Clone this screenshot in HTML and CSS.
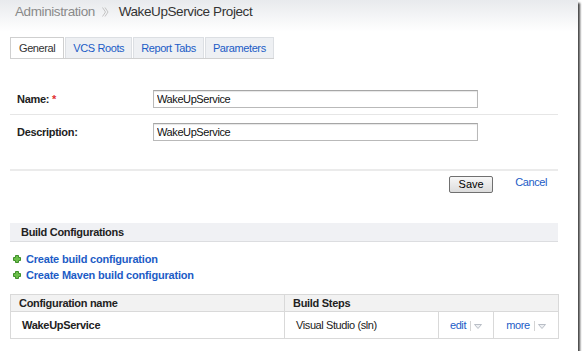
FILE: index.html
```html
<!DOCTYPE html>
<html lang="en">
<head>
<meta charset="UTF-8">
<title>WakeUpService Project</title>
<link rel="stylesheet" href="styles.css">
</head>
<body>
<div class="shot">
    <div class="page-head">
        <h1><span class="crumb">Administration</span>
            <svg class="crumb-sep" width="7" height="10" viewBox="0 0 7 10"><path d="M0.5 0.5 L3.5 5 L0.5 9.5 M3 0.5 L6 5 L3 9.5" fill="none" stroke="#c4c4c4" stroke-width="1"/></svg>
            WakeUpService Project</h1>
    </div>

    <ul class="tabs">
        <li class="tab active">General</li>
        <li class="tab"><a href="#">VCS Roots</a></li>
        <li class="tab"><a href="#">Report Tabs</a></li>
        <li class="tab"><a href="#">Parameters</a></li>
    </ul>

    <form class="settings">
        <div class="field">
            <label for="name">Name: <span class="req">*</span></label>
            <input id="name" type="text" value="WakeUpService">
        </div>
        <div class="field last">
            <label for="desc">Description:</label>
            <input id="desc" type="text" value="WakeUpService">
        </div>
        <div class="actions">
            <button type="button" class="btn-save">Save</button>
            <a href="#" class="cancel">Cancel</a>
        </div>
    </form>

    <div class="build">
        <h2 class="section-title">Build Configurations</h2>
        <ul class="create-links">
            <li><svg class="plus" width="8" height="8" viewBox="0 0 8 8"><path d="M2.5 0.5h3v2h2v3h-2v2h-3v-2h-2v-3h2z" fill="#6cc04a" stroke="#3f8f2a" stroke-width="1"/></svg><a href="#">Create build configuration</a></li>
            <li><svg class="plus" width="8" height="8" viewBox="0 0 8 8"><path d="M2.5 0.5h3v2h2v3h-2v2h-3v-2h-2v-3h2z" fill="#6cc04a" stroke="#3f8f2a" stroke-width="1"/></svg><a href="#">Create Maven build configuration</a></li>
        </ul>

        <table class="configs">
            <colgroup>
                <col class="w-name">
                <col class="w-steps">
                <col class="w-edit">
                <col class="w-more">
            </colgroup>
            <thead>
                <tr><th>Configuration name</th><th colspan="3">Build Steps</th></tr>
            </thead>
            <tbody>
                <tr>
                    <td class="c-name"><strong>WakeUpService</strong></td>
                    <td class="c-steps">Visual Studio (sln)</td>
                    <td class="c-act"><a href="#">edit</a><span class="drop"><svg width="8" height="5" viewBox="0 0 8 5"><path d="M0.5 0.5h7l-3.5 4z" fill="#eef0f3" stroke="#b9bec6" stroke-width="1"/></svg></span></td>
                    <td class="c-act"><a href="#">more</a><span class="drop"><svg width="8" height="5" viewBox="0 0 8 5"><path d="M0.5 0.5h7l-3.5 4z" fill="#eef0f3" stroke="#b9bec6" stroke-width="1"/></svg></span></td>
                </tr>
            </tbody>
        </table>
    </div>
</div>
</body>
</html>
```

FILE: styles.css
```css
html,
body {
    margin: 0;
    padding: 0;
    background: #fff;
}
body {
    font-family: "Liberation Sans", Arial, sans-serif;
    font-size: 11px;
    letter-spacing: -0.4px;
    color: #222;
}
a {
    color: #1c5cc6;
    text-decoration: none;
}
b,
strong {
    letter-spacing: -0.3px;
}

.shot {
    width: 578px;
    height: 351px;
    background: #fff;
    box-shadow: 2px 3px 2px #444;
    overflow: hidden;
}

/* header */
.page-head {
    height: 37px;
    background: linear-gradient(#e8eaed, #fff 32px);
}
.page-head h1 {
    margin: 0;
    padding: 2px 0 0 15px;
    font-size: 13.5px;
    line-height: 20px;
    font-weight: normal;
    letter-spacing: -0.4px;
    color: #333;
}
.page-head .crumb {
    color: #8a8a8a;
}
.crumb-sep {
    margin: 0 6px 0 4px;
    vertical-align: -1px;
}

/* tabs */
.tabs {
    display: flex;
    gap: 1px;
    width: fit-content;
    margin: 0 0 0 10px;
    padding: 0;
    list-style: none;
    border-bottom: 1px solid #d0d0d0;
}
.tab {
    height: 20px;
    line-height: 21px;
    padding: 0 7px;
    background: #eef0f3;
    border: 1px solid #dcdfe3;
    border-bottom: none;
}
.tab.active {
    padding: 0 8px;
    background: #fff;
    border-color: #cfcfcf;
    color: #333;
}

/* form */
.settings {
    margin: 25px 20px 0 10px;
}
.field {
    display: flex;
    align-items: center;
    padding: 6px 0 6px 7px;
    border-bottom: 1px solid #e6e6e6;
}
.field.last {
    padding: 8px 0 28px 7px;
    border-bottom: 2px solid #ebebeb;
}
.field label {
    width: 136px;
    font-weight: bold;
    letter-spacing: -0.3px;
    color: #222;
}
.req {
    color: #e03030;
}
.field input {
    box-sizing: border-box;
    width: 325px;
    height: 18px;
    margin: 0;
    padding: 0 3px;
    border: 1px solid #b9b9b9;
    border-top-color: #a6a6a6;
    box-shadow: inset 0 1px 1px #e6e6e6;
    font-family: inherit;
    font-size: 11px;
    letter-spacing: -0.4px;
    color: #111;
}
.actions {
    display: flex;
    justify-content: flex-end;
    align-items: flex-start;
    padding: 5px 11px 0 0;
}
.btn-save {
    box-sizing: border-box;
    width: 44px;
    height: 17px;
    padding: 0;
    border: 1px solid #707070;
    border-radius: 2px;
    background: linear-gradient(#f7f7f7, #dcdcdc);
    font-family: inherit;
    font-size: 11px;
    line-height: 15px;
    color: #000;
}
.cancel {
    margin-left: 22px;
    line-height: 13px;
}

/* build configurations */
.build {
    margin: 30px 20px 0 10px;
}
.section-title {
    margin: 0;
    height: 18px;
    line-height: 19px;
    padding-left: 11px;
    background: #f0f1f4;
    border-bottom: 1px solid #dcdde0;
    font-size: 11px;
    letter-spacing: -0.3px;
    color: #222;
}
.create-links {
    margin: 9px 0 0;
    padding: 0 0 0 3px;
    list-style: none;
}
.create-links li {
    line-height: 16px;
}
.create-links a {
    font-weight: bold;
    letter-spacing: -0.2px;
}
.plus {
    margin-right: 5px;
}

.configs {
    width: 100%;
    margin-top: 11px;
    table-layout: fixed;
    border-collapse: collapse;
    border: 1px solid #d9d9d9;
}
.w-name { width: 274px; }
.w-steps { width: 154px; }
.w-edit { width: 55px; }
.w-more { width: 65px; }
.configs th {
    height: 16px;
    padding: 0 8px;
    text-align: left;
    background: #f2f2f2;
    border: 1px solid #d9d9d9;
    letter-spacing: -0.3px;
    color: #222;
}
.configs td {
    height: 26px;
    padding: 0 10px;
    border: 1px solid #d9d9d9;
}
.configs td.c-name {
    padding-left: 11px;
}
.configs td.c-steps {
    padding-left: 11px;
}
.configs td.c-act {
    padding: 0;
    text-align: center;
    white-space: nowrap;
}
.drop {
    display: inline-block;
    margin-left: 4px;
    padding-left: 3px;
    border-left: 1px solid #d4d4d4;
    height: 10px;
    line-height: 10px;
    vertical-align: -1px;
}
.drop svg {
    vertical-align: 1px;
}
```
